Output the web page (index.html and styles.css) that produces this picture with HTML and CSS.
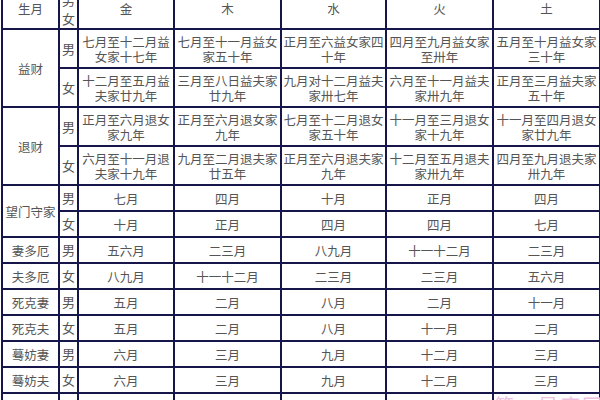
FILE: index.html
```html
<!DOCTYPE html>
<html lang="zh-CN">
<head>
<meta charset="utf-8">
<link rel="stylesheet" href="styles.css">
</head>
<body>
<div class="page">
<table class="tbl">
<colgroup>
<col class="c-label"><col class="c-sex"><col class="c-jin"><col class="c-mu"><col class="c-shui"><col class="c-huo"><col class="c-tu">
</colgroup>
<tr class="head">
<td>生月</td><td class="sex sex-head">男<br>女</td><td>金</td><td>木</td><td>水</td><td>火</td><td>土</td>
</tr>
<tr class="dbl">
<td rowspan="2">益财</td><td class="sex">男</td>
<td>七月至十二月益女家十七年</td><td>七月至十一月益女家五十年</td><td>正月至六益女家四十年</td><td>四月至九月益女家至卅年</td><td>五月至十月益女家三十年</td>
</tr>
<tr class="dbl">
<td class="sex">女</td>
<td>十二月至五月益夫家廿九年</td><td>三月至八日益夫家廿九年</td><td>九月对十二月益夫家卅七年</td><td>六月至十一月益夫家卅九年</td><td>正月至三月益夫家五十年</td>
</tr>
<tr class="dbl">
<td rowspan="2">退财</td><td class="sex">男</td>
<td>正月至六月退女家九年</td><td>正月至六月退女家九年</td><td>七月至十二月退女家五十年</td><td>十一月至三月退女家十九年</td><td>十一月至四月退女家廿九年</td>
</tr>
<tr class="dbl">
<td class="sex">女</td>
<td>六月至十一月退夫家十九年</td><td>九月至二月退夫家廿五年</td><td>正月至六月退夫家九年</td><td>十二月至五月退夫家卅九年</td><td>四月至九月退夫家卅九年</td>
</tr>
<tr class="sgl">
<td rowspan="2">望门守家</td><td class="sex">男</td>
<td>七月</td><td>四月</td><td>十月</td><td>正月</td><td>四月</td>
</tr>
<tr class="sgl">
<td class="sex">女</td>
<td>十月</td><td>正月</td><td>四月</td><td>四月</td><td>七月</td>
</tr>
<tr class="sgl">
<td>妻多厄</td><td class="sex">男</td>
<td>五六月</td><td>二三月</td><td>八九月</td><td>十一十二月</td><td>二三月</td>
</tr>
<tr class="sgl">
<td>夫多厄</td><td class="sex">女</td>
<td>八九月</td><td>十一十二月</td><td>二三月</td><td>二三月</td><td>五六月</td>
</tr>
<tr class="sgl">
<td>死克妻</td><td class="sex">男</td>
<td>五月</td><td>二月</td><td>八月</td><td>二月</td><td>十一月</td>
</tr>
<tr class="sgl">
<td>死克夫</td><td class="sex">女</td>
<td>五月</td><td>二月</td><td>八月</td><td>十一月</td><td>二月</td>
</tr>
<tr class="sgl">
<td>蓦妨妻</td><td class="sex">男</td>
<td>六月</td><td>三月</td><td>九月</td><td>十二月</td><td>三月</td>
</tr>
<tr class="sgl">
<td>蓦妨夫</td><td class="sex">女</td>
<td>六月</td><td>三月</td><td>九月</td><td>十二月</td><td>三月</td>
</tr>
<tr class="sgl">
<td>孤寡宿</td><td class="sex">女</td>
<td>七月</td><td>四月</td><td>十月</td><td>正月</td><td class="wm-cell"><span class="mark">第一星座网</span></td>
</tr>
</table>
</div>
</body>
</html>
```
FILE: styles.css
```css
html, body {
  margin: 0;
  padding: 0;
  background: #ffffff;
  overflow: hidden;
}
.page {
  width: 600px;
  height: 400px;
  overflow: hidden;
}
.tbl {
  margin-top: -13px;
  margin-left: 1px;
  width: 598px;
  table-layout: fixed;
  border-collapse: collapse;
  font-family: "Noto Sans CJK SC", "Noto Sans", sans-serif;
  font-size: 12.5px;
  line-height: 15px;
  color: #555555;
}
.c-label { width: 57px; }
.c-sex { width: 19px; }
.c-jin { width: 96px; }
.c-mu { width: 107px; }
.c-shui { width: 105px; }
.c-huo { width: 107px; }
.c-tu { width: 107px; }
.tbl td {
  border: 2px solid #16164a;
  padding: 0;
  text-align: center;
  vertical-align: middle;
}
.tbl td.sex {
  font-size: 13px;
  line-height: 18px;
}
.tbl td.sex-head {
  line-height: 19px;
}
.head td { height: 39px; }
.dbl td { height: 37px; }
.sgl td { height: 24px; }
.tbl td.wm-cell {
  vertical-align: top;
  padding-top: 1px;
}
.mark {
  display: block;
  font-size: 20px;
  line-height: 22px;
  color: #eec0e0;
  letter-spacing: 2px;
  white-space: nowrap;
}
```
